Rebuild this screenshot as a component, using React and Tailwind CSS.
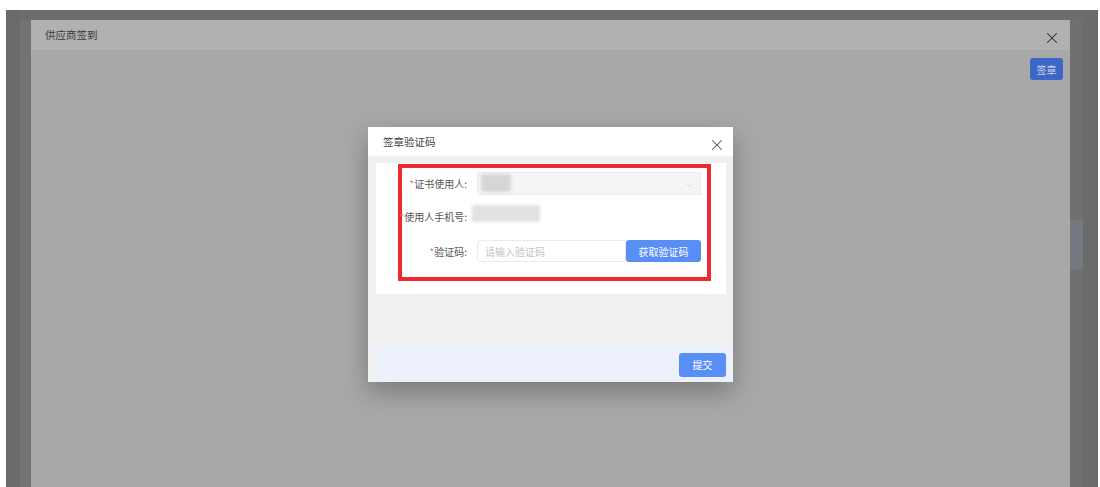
import { X, ChevronDown } from 'lucide-react'

const font = { fontFamily: '"Noto Sans CJK SC", "Noto Sans", sans-serif' }

function Label({ children }) {
  return (
    <div className="w-[68px] shrink-0 pr-[3px] text-right text-[10px] text-[#555] whitespace-nowrap">
      <span className="text-[#f56c6c]">*</span>
      {children}:
    </div>
  )
}

function VerifyDialog() {
  return (
    <div className="absolute left-[368px] top-[127px] w-[365px] h-[255px] flex flex-col bg-[#f0f0f0] shadow-[0_10px_24px_rgba(0,0,0,0.28)]">
      {/* header */}
      <div className="h-[29px] shrink-0 bg-white flex items-center justify-between pl-[15px] pr-[7px]">
        <span className="text-[10.5px] text-[#444] mt-[1px]">签章验证码</span>
        <X className="w-[18px] h-[18px] text-[#555] mt-[7px]" strokeWidth={1.4} />
      </div>

      {/* form card */}
      <div className="mt-[7px] ml-[8px] mr-[7px] h-[131px] bg-white">
        <div className="ml-[22px] mr-[15px] mt-[1px] border-[4px] border-[#ec2b2e] pt-[4px] pb-[15px]">
          <div className="flex items-center h-[23px]">
            <Label>证书使用人</Label>
            <div className="ml-[7px] w-[224px] h-full bg-[#f5f5f5] border border-[#ebebeb] rounded-[2px] relative flex items-center justify-end pr-[6px]">
              <div className="absolute left-[3px] top-[1px] w-[30px] h-[18px] rounded-[3px] bg-[#d6d6d6] blur-[1.5px]" />
              <ChevronDown className="w-[9px] h-[9px] text-[#bbb] mt-[3px]" strokeWidth={1.5} />
            </div>
          </div>
          <div className="flex items-start h-[20px] mt-[8px] -ml-[4px]">
            <div className="w-[72px] shrink-0 pr-[3px] mt-[7px] text-right text-[10px] text-[#555] whitespace-nowrap leading-[14px]">
              <span className="text-[#f56c6c]">*</span>使用人手机号:
            </div>
            <div className="ml-[2px] mt-[2px] w-[68px] h-[17px] bg-[#e2e2e2] blur-[1.5px]" />
          </div>
          <div className="flex items-center h-[22px] mt-[17px]">
            <Label>验证码</Label>
            <div className="ml-[7px] flex w-[224px] h-full">
              <div className="flex-1 border border-[#eaeaea] rounded-l-[3px] flex items-center pl-[7px] text-[10px] text-[#c4c4c4]">
                请输入验证码
              </div>
              <button className="w-[75px] bg-[#5a8ef7] rounded-[3px] text-white text-[10px]">获取验证码</button>
            </div>
          </div>
        </div>
      </div>

      <div className="flex-1" />

      {/* footer */}
      <div className="h-[35px] ml-[8px] mb-[1px] bg-[#edf1fb] flex items-center justify-end pr-[7px]">
        <button className="w-[47px] h-[24px] bg-[#5a8ef7] rounded-[3px] text-white text-[10px] mt-[2px]">提交</button>
      </div>
    </div>
  )
}

export default function App() {
  return (
    <div className="relative w-[1100px] h-[487px] bg-white overflow-hidden" style={font}>
      <div className="absolute left-[6px] top-[10px] w-[1092px] h-[477px] bg-[#6d6d6d] flex">
        <div className="w-[14px] h-full bg-[#6a6a6a]" />
        <div className="w-[11px] h-full bg-[#727272] flex flex-col">
          <div className="h-[10px] bg-[#6d6d6d]" />
        </div>

        {/* outer page dialog */}
        <div className="mt-[10px] w-[1039px] flex flex-col">
          <div className="h-[30px] bg-[#b1b1b1] flex items-center justify-between pl-[14px] pr-[9px]">
            <span className="text-[10.5px] text-[#3a3a3a]">供应商签到</span>
            <X className="w-[18px] h-[18px] text-[#2e2e2e] mt-[6px]" strokeWidth={1.4} />
          </div>
          <div className="flex-1 bg-[#a8a8a8] flex justify-end items-start pt-[8px] pr-[7px]">
            <button className="w-[33px] h-[22px] bg-[#3d67c6] rounded-[3px] text-[10px] text-[#c9d3ea]">签章</button>
          </div>
        </div>

        <div className="w-[13px] h-full bg-[#707070] flex flex-col">
          <div className="h-[10px] bg-[#6d6d6d]" />
          <div className="mt-[200px] h-[50px] bg-[#757880]" />
        </div>
        <div className="flex-1 h-full bg-[#6b6b6b]" />
      </div>

      <VerifyDialog />
    </div>
  )
}
